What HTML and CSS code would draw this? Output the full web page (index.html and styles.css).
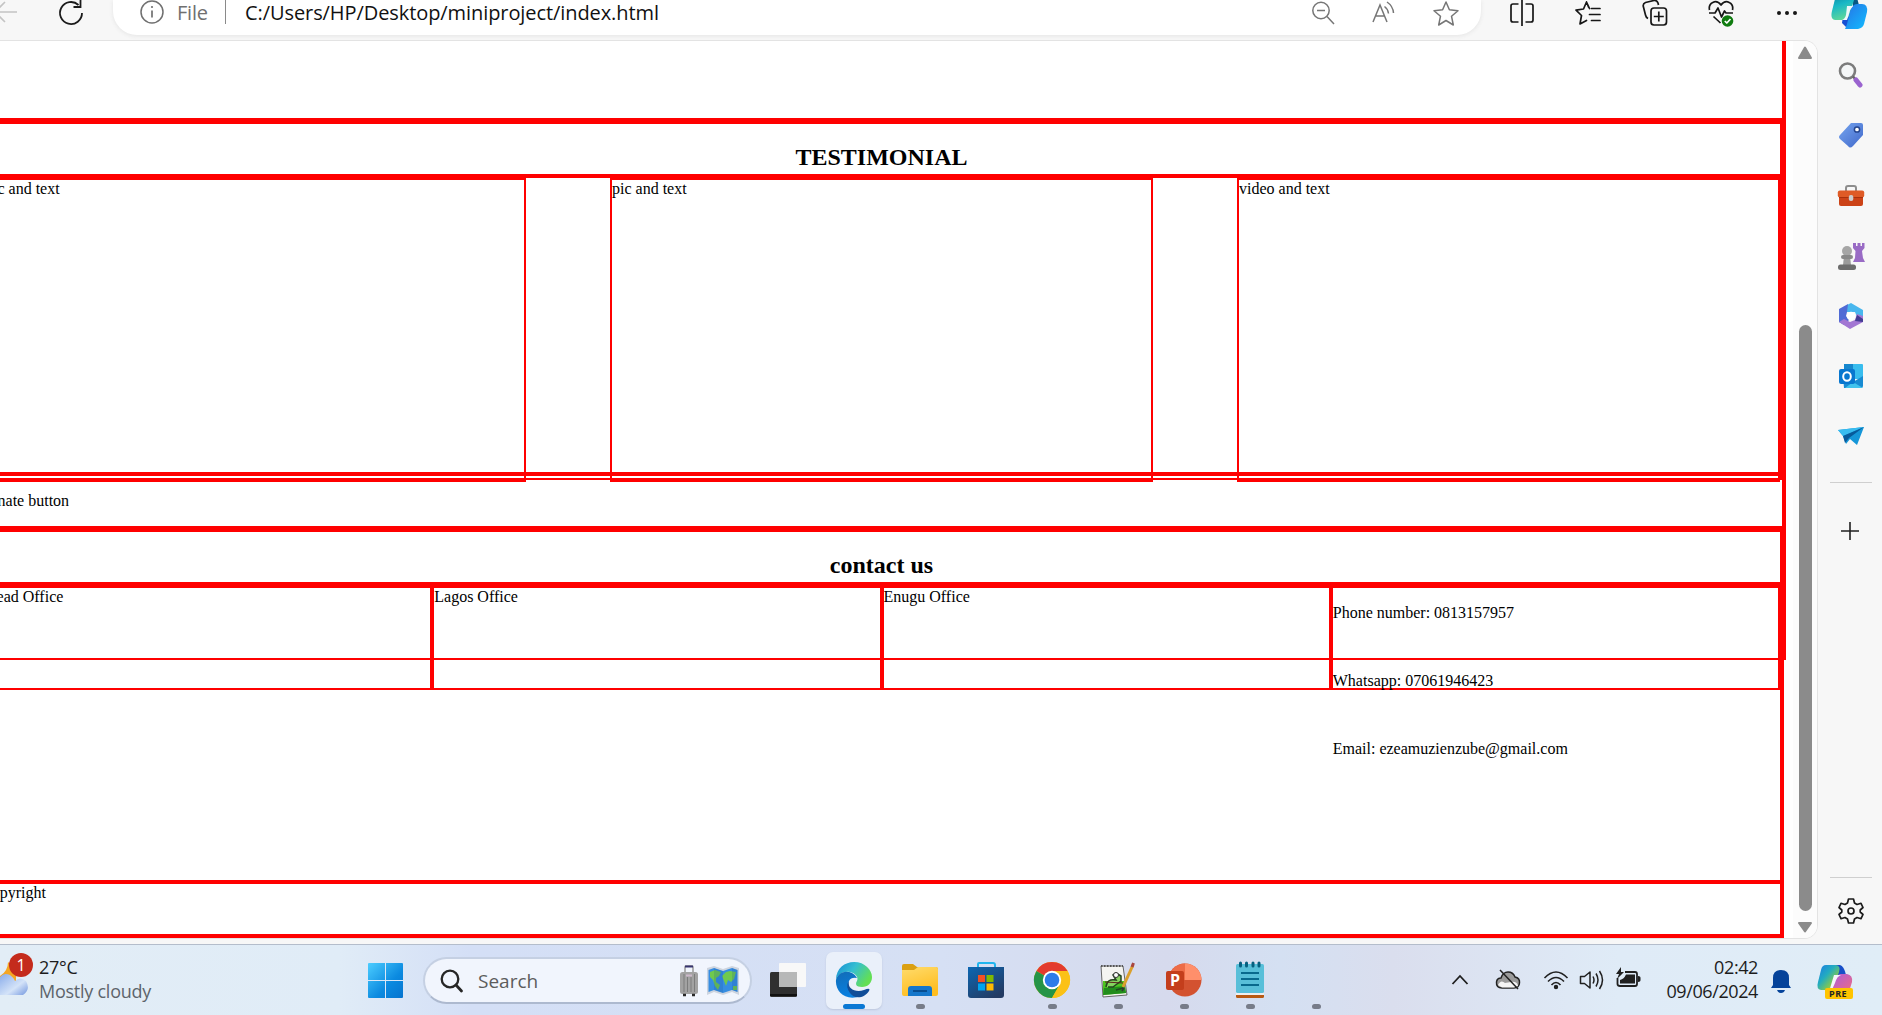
FILE: index.html
```html
<!DOCTYPE html>
<html lang="en">
<head>
<meta charset="utf-8">
<title>miniproject</title>
<link rel="stylesheet" href="styles.css">
</head>
<body>
<div class="screen">
  <header class="toolbar">
    <div class="nav">
      <svg class="back" width="18" height="26" viewBox="0 0 18 26"><path d="M-8 12H17M5 2L-5 12L5 22" fill="none" stroke="#c4c4c4" stroke-width="1.6"/></svg>
      <svg class="reload" width="28" height="28" viewBox="0 0 28 28"><path d="M25 14A11 11 0 1 1 21.500 6M23.500 1V8H16.500" fill="none" stroke="#1b1b1b" stroke-width="1.8"/></svg>
    </div>
    <div class="address">
      <svg class="info" width="26" height="26" viewBox="0 0 26 26"><circle cx="13" cy="13" r="11" fill="none" stroke="#707070" stroke-width="1.5"/><path d="M13 11.500V18.500" stroke="#707070" stroke-width="1.7"/><circle cx="13" cy="8" r="1.100" fill="#707070"/></svg>
      <span class="scheme">File</span><i class="bar"></i>
      <span class="url">C:/Users/HP/Desktop/miniproject/index.html</span>
      <div class="pillicons">
        <svg width="26" height="26" viewBox="0 0 26 26" fill="none" stroke="#767676" stroke-width="1.5"><circle cx="11" cy="10.500" r="8.200"/><path d="M17 16.500L24 24M7 10.500H15"/></svg>
        <svg width="26" height="26" viewBox="0 0 26 26" fill="none" stroke="#767676" stroke-width="1.5"><path d="M2 22L9 5L16 22M4.500 16H13.500M13.500 6.500Q17 9 17.500 13.500M16 2Q22 6 22.500 13"/></svg>
        <svg width="28" height="28" viewBox="0 0 28 28" fill="none" stroke="#767676" stroke-width="1.5" stroke-linejoin="round"><path d="M14 2L17.400 9.800L26 10.700L19.500 16.200L21.300 25L14 20.500L6.700 25L8.500 16.200L2 10.700L10.600 9.800Z"/></svg>
      </div>
    </div>
    <div class="actions">
      <svg width="28" height="28" viewBox="0 0 28 28" fill="none" stroke="#171717" stroke-width="1.700"><path d="M14 1V27M10.500 5H5Q3 5 3 7V21Q3 23 5 23H10.500M17.500 5H23Q25 5 25 7V21Q25 23 23 23H17.500"/></svg>
      <svg width="28" height="28" viewBox="0 0 28 28" fill="none" stroke="#171717" stroke-width="1.700" stroke-linejoin="round" stroke-linecap="round"><path d="M14.500 8L12.500 3L9.500 10L2 11.200L7.500 16.500L6 25L12.500 21.500M12.500 3L15.500 9.500M17.500 9.500H26M15.500 15.500H26M17.500 21.500H26"/></svg>
      <svg width="28" height="28" viewBox="0 0 28 28" fill="none" stroke="#171717" stroke-width="1.700" stroke-linejoin="round"><rect x="10" y="9" width="15.500" height="17" rx="3"/><path d="M17.800 12.500V22.500M12.800 17.500H22.800M7 19.500Q5 18.500 4.500 16L2.200 7Q2 4.500 4.500 3.500L13 1.500Q16 1.200 17 4L17.500 6"/></svg>
      <svg width="28" height="28" viewBox="0 0 28 28" fill="none" stroke="#171717" stroke-width="1.700" stroke-linejoin="round"><path d="M2.500 11C1 4 9 -.5 14 6C19 -.5 27 4 25.500 11M2 14H8L11 9L14.500 18L17.500 12L19 14H26M6.500 17.500L13.500 24"/><circle cx="20.500" cy="22" r="5.800" fill="#107c10" stroke="none"/><path d="M17.800 22L19.800 24L23.500 20" stroke="#fff"/></svg>
      <svg width="28" height="28" viewBox="0 0 28 28" fill="#171717"><circle cx="6" cy="14" r="2"/><circle cx="14" cy="14" r="2"/><circle cx="22" cy="14" r="2"/></svg>
    </div>
    <svg class="copilot" width="38" height="38" viewBox="0 0 38 38">
      <defs><linearGradient id="ca" x2=".3" y2="1"><stop stop-color="#087d9b"/><stop offset=".5" stop-color="#18b8c6"/><stop offset="1" stop-color="#5bd69c"/></linearGradient><linearGradient id="cb" y2="1"><stop stop-color="#2673e5"/><stop offset="1" stop-color="#12bcff"/></linearGradient></defs>
      <path d="M12 31L17 36L24 15L14 17Z" fill="#164fd3"/><path d="M22 1Q27 2 29 14H23Z" fill="#075782"/>
      <path d="M9 1H21Q25 2 24 8L19 24Q17 28 12 28H5Q0 27 2 19L5 7Q6 2 9 1Z" fill="url(#ca)"/>
      <path d="M15 37H28Q33 36 34 32L37 20Q38 12 32 12H27Q22 12 20 20L17 32Q16 35 15 37Z" fill="url(#cb)"/>
      <path d="M17 14H23Q20 17 19 22L17 28H12Q15 27 16 23Z" fill="#eef7fb"/>
    </svg>
  </header>

  <div class="middle">
    <main class="viewport">
      <div class="page">
        <section class="testimonial">
          <h2>TESTIMONIAL</h2>
          <div class="cards">
            <article>pic and text</article>
            <article>pic and text</article>
            <article>video and text</article>
          </div>
        </section>
        <p class="donate">Donate button</p>
        <section class="contact">
          <h2>contact us</h2>
          <div class="offices">
            <div>Head Office</div>
            <div>Lagos Office</div>
            <div>Enugu Office</div>
            <div class="details"><p>Phone number: 0813157957</p><p>Whatsapp: 07061946423</p><p>Email: ezeamuzienzube@gmail.com</p></div>
          </div>
          <footer>Copyright</footer>
        </section>
      </div>
      <div class="scroll">
        <svg width="16" height="14" viewBox="0 0 16 14"><path d="M8 1.500L14 12H2Z" fill="#8b8b8b" stroke="#8b8b8b" stroke-width="2" stroke-linejoin="round"/></svg>
        <i class="thumb"></i>
        <svg width="16" height="12" viewBox="0 0 16 12"><path d="M8 10.500L14 2H2Z" fill="#8b8b8b" stroke="#8b8b8b" stroke-width="2" stroke-linejoin="round"/></svg>
      </div>
    </main>
    <aside class="sidebar">
      <svg width="28" height="28" viewBox="0 0 28 28"><circle cx="10.500" cy="11" r="7.500" fill="#f4f6f7" stroke="#7c7c7c" stroke-width="2.600"/><path d="M16 16.500L19 20" stroke="#666" stroke-width="2.500"/><path d="M19 20L23 25" stroke="#9a63cf" stroke-width="5" stroke-linecap="round"/></svg>
      <svg width="28" height="30" viewBox="0 0 28 30"><defs><linearGradient id="tg" y2="1"><stop stop-color="#76a5ef"/><stop offset="1" stop-color="#4068ca"/></linearGradient></defs><path d="M14 3H24Q26 3 26 5V15L16 26Q13 29 11 26L3 19Q1 17 3 15Z" fill="url(#tg)"/><circle cx="20" cy="9.500" r="2.600" fill="#fff" stroke="#24458f" stroke-width="1.500"/></svg>
      <svg width="28" height="28" viewBox="0 0 28 28"><path d="M9 9V6Q9 4 11 4H17Q19 4 19 6V9" fill="none" stroke="#8d8d8d" stroke-width="2"/><rect x="2" y="13" width="24" height="11" rx="2" fill="#cc4317"/><rect x=".8" y="8.500" width="26.400" height="7" rx="2" fill="#df5b26"/><path d="M2 15.500H26" stroke="#a9310c"/><rect x="11.800" y="13" width="4.500" height="6" rx="2" fill="#cdcdcd"/></svg>
      <svg width="28" height="28" viewBox="0 0 28 28"><path d="M16 1H19V4H20.500V1H23.500V4H25V1H27.500V6L25 9L26 16L28 20H16L18 16L18.500 9L16 6Z" fill="#996bc5"/><circle cx="10" cy="9" r="5" fill="#a6a6a6"/><path d="M7 14H13L14 23H6Z" fill="#9a9a9a"/><rect x="4" y="13" width="12" height="4" rx="2" fill="#898989"/><rect x="1" y="22.500" width="18" height="5.500" rx="2.500" fill="#6c6c6c"/></svg>
      <svg width="28" height="28" viewBox="0 0 28 28"><path d="M10 3L14 1L26 8V20L21 17L18 10L10 10Z" fill="#49b7ee"/><path d="M11 2L2 7V20L7 23L12 18L9 14L10 10Z" fill="#506bd5"/><path d="M2 20L13 27L26 20V14L20 12L18 18L13 20L7 17Z" fill="#a276d3"/><path d="M20 13L26 17V20L18 19Z" fill="#453c94"/><circle cx="14" cy="14" r="4.300" fill="#fff"/></svg>
      <svg width="28" height="28" viewBox="0 0 28 28"><rect x="7" y="2" width="19" height="15" rx="1" fill="#39bdee"/><path d="M7 2H16V10H7Z" fill="#1687cd"/><path d="M6 14L16 20L26 14V24Q26 26 24 26H7Z" fill="#188bd2"/><path d="M16 20L26 26H8Z" fill="#41c3ed"/><rect x="2" y="7" width="16" height="15" rx="2" fill="#0877cf"/><ellipse cx="10" cy="14.500" rx="3.800" ry="4.200" fill="none" stroke="#fff" stroke-width="2"/></svg>
      <svg width="28" height="28" viewBox="0 0 28 28"><path d="M1 8L27 5L20 23L13 17L9 22L6 14Z" fill="#1596d8"/><path d="M1 8L27 5L6 14Z" fill="#38bcf0"/><path d="M6 14L27 5L12 16L8 21Z" fill="#075a9b"/></svg>
      <i class="rule"></i>
      <svg class="plus" width="20" height="20" viewBox="0 0 20 20"><path d="M10 1V19M1 10H19" stroke="#202020" stroke-width="1.600"/></svg>
      <i class="rule lower"></i>
      <svg class="gear" width="28" height="28" viewBox="0 0 28 28" fill="none" stroke="#1b1b1b" stroke-width="1.700" stroke-linejoin="round"><path d="M11.500 2H16.500L17.500 6L20 7.500L24 6.300L26 10.500L23.200 13V15L26 17.500L24 21.700L20 20.500L17.500 22L16.500 26H11.500L10.500 22L8 20.500L4 21.700L2 17.500L4.800 15V13L2 10.500L4 6.300L8 7.500L10.500 6Z"/><circle cx="14" cy="14" r="3"/></svg>
    </aside>
  </div>

  <div class="taskbar">
    <div class="weather">
      <div class="sky">
        <svg width="30" height="40" viewBox="0 0 30 40"><defs><linearGradient id="cl" y2="1"><stop stop-color="#89acea"/><stop offset=".6" stop-color="#d4e3f8"/><stop offset="1" stop-color="#7397df"/></linearGradient></defs><path d="M8 5Q8 14 0 19V24H16V12Z" fill="#f5a623"/><path d="M0 20Q4 15 10 18Q13 20 15 24Q20 19 26 24Q31 33 23 38H0Z" fill="url(#cl)"/></svg>
        <b class="count">1</b>
      </div>
      <div class="temp"><span>27°C</span><span class="dim">Mostly cloudy</span></div>
    </div>
    <svg class="start" width="36" height="36" viewBox="0 0 36 36"><defs><linearGradient id="wn" x2="1" y2="1"><stop stop-color="#4ccdff"/><stop offset=".6" stop-color="#0b8ae0"/><stop offset="1" stop-color="#0674cf"/></linearGradient></defs><path d="M0 1Q0 0 1 0H17V17H0ZM18 0H34Q35 0 35 1V17H18ZM0 18H17V35H1Q0 35 0 34ZM18 18H35V34Q35 35 34 35H18Z" fill="url(#wn)"/></svg>
    <div class="search">
      <svg width="24" height="24" viewBox="0 0 24 24"><circle cx="10" cy="10" r="8.300" fill="none" stroke="#262626" stroke-width="2.300"/><path d="M16 16L21.500 22" stroke="#262626" stroke-width="2.800" stroke-linecap="round"/></svg>
      <span>Search</span>
      <svg class="bag" width="20" height="32" viewBox="0 0 20 32"><path d="M6 8V2Q6 1 7 1H13Q14 1 14 2V8" fill="none" stroke="#999" stroke-width="1.500"/><path d="M6 1.500H14" stroke="#37356f" stroke-width="2"/><rect x="1" y="7" width="18" height="22" rx="2.500" fill="#a2a2a2"/><path d="M5 9V27M8.500 12V27M12 12V27M15.500 9V27" stroke="#7c7c7c"/><path d="M7 10.500H13" stroke="#ccb9cb" stroke-width="2"/><path d="M4 30H7M13 30H16" stroke="#292929" stroke-width="2.500"/></svg>
      <svg width="34" height="30" viewBox="0 0 34 30"><path d="M1 2L8 0L17 3L26 0L33 2V29L26 26L17 29L8 26L1 29Z" fill="#cdd4df"/><path d="M2.500 4L8 2L17 5L26 2L31.500 4V26L26 24L17 27L8 24L2.500 26Z" fill="#368de1"/><path d="M4 6L9 4L15 6L13 10L10 12V16L14 19L12 24L9 20L7 14L4 11ZM16 10L20 6L24 5L30 6L28 13L25 16L22 14L20 20L18 15ZM27 20H31V24H27Z" fill="#6fc94d"/><path d="M8 2V24L17 27V5ZM26 2V24L31.500 26V4Z" fill="#164c98" opacity=".18"/></svg>
    </div>
    <div class="apps">
      <div class="app"><svg width="38" height="38" viewBox="0 0 38 38"><rect x="1" y="11" width="27" height="25" rx="1.500" fill="#2f2f2f"/><path d="M1 34H28" stroke="#111" stroke-width="2"/><rect x="10" y="2" width="27" height="24" rx="1" fill="#f8f8f8"/><rect x="10" y="11" width="18" height="15" fill="#b7b8b8"/></svg></div>
      <div class="app active"><svg width="38" height="38" viewBox="0 0 38 38"><defs><linearGradient id="eg" x2="1" y2=".5"><stop stop-color="#168bd5"/><stop offset=".5" stop-color="#35bfd1"/><stop offset="1" stop-color="#63df54"/></linearGradient><linearGradient id="eb" x2=".3" y2="1"><stop stop-color="#126cb6"/><stop offset="1" stop-color="#087fe0"/></linearGradient></defs><path d="M1 19C1 7 10 1 19 1C30 1 37 9 37 16C37 22 33 26 27 26C21 26 20 23 22 20C24 16 20 12 15 11C8 10 3 13 1 19Z" fill="url(#eg)"/><path d="M1 19C3 11 11 9 17 12Q21 14 22 17Q16 16 14 20C10 29 20 37 26 35C10 41 0 30 1 19Z" fill="url(#eb)"/><path d="M14 20C12 28 21 32 29 29Q36 26 34 30C29 38 19 38 15 32Q10 25 14 20Z" fill="#104d98"/></svg></div>
      <div class="app run"><svg width="38" height="38" viewBox="0 0 38 38"><defs><linearGradient id="fg" x2=".4" y2="1"><stop stop-color="#ffdc6d"/><stop offset="1" stop-color="#ffbd20"/></linearGradient></defs><path d="M1 5Q1 3 3 3H12L16 6H34Q37 6 37 8V15H1Z" fill="#dba012"/><path d="M1 9H13L17 6H35Q37 6 37 8V33Q37 35 35 35H3Q1 35 1 33Z" fill="url(#fg)"/><path d="M7 35V28Q7 25 10 25H28Q31 25 31 28V35Z" fill="#1476cb"/><path d="M12 30H26" stroke="#064d91" stroke-width="2"/></svg></div>
      <div class="app"><svg width="38" height="38" viewBox="0 0 38 38"><defs><linearGradient id="sg" x2=".7" y2="1"><stop stop-color="#0c67b3"/><stop offset="1" stop-color="#243b63"/></linearGradient></defs><path d="M11 8V3Q11 2 12 2H26Q28 2 28 4V8" fill="none" stroke="#20b5ee" stroke-width="2"/><path d="M1 6H37V34Q37 37 34 37H4Q1 37 1 34Z" fill="url(#sg)"/><path d="M11 14H18V21H11Z" fill="#f25022"/><path d="M19.500 14H26.500V21H19.500Z" fill="#7fba00"/><path d="M11 22.500H18V29.500H11Z" fill="#00a4ef"/><path d="M19.500 22.500H26.500V29.500H19.500Z" fill="#ffb900"/></svg></div>
      <div class="app run"><svg width="38" height="38" viewBox="0 0 38 38"><circle cx="19" cy="19" r="18" fill="#fbc116"/><path d="M19 19L3.400 10A18 18 0 0 1 34.600 10Z" fill="#e33b2e"/><path d="M3.400 10A18 18 0 0 0 19 37L26.800 23.500L19 19Z" fill="#259447"/><path d="M19 10H34.600A18 18 0 0 1 19 37L27 23Z" fill="#fbc116"/><circle cx="19" cy="19" r="9.200" fill="#fff"/><circle cx="19" cy="19" r="7.300" fill="#2c7ce9"/></svg></div>
      <div class="app run"><svg width="38" height="38" viewBox="0 0 38 38"><path d="M2 5L24 5L28 34L4 36Z" fill="#f4f4f1" stroke="#666"/><path d="M2 5H24" stroke="#555" stroke-width="2" stroke-dasharray="1.500 1.500"/><path d="M4 20H25L27 32L4 34Z" fill="#4dc520"/><path d="M5 27L26 25L27 32L4 34Z" fill="#218c1c"/><path d="M7 26Q8 17 17 19L14 14L17 12L22 15V20L18 23L14 26H9M17 29L24 27" fill="#85d35e" stroke="#24441f" stroke-width="1.500"/><circle cx="17" cy="14" r="2.500" fill="#fff" stroke="#333"/><path d="M6 21L24 22" stroke="#5d241f"/><path d="M24 26L34 4" stroke="#dba02c" stroke-width="3"/><path d="M33 6L34.500 2" stroke="#a8453f" stroke-width="3"/><path d="M23 30L25 27" stroke="#333" stroke-width="1.500"/></svg></div>
      <div class="app run"><svg width="38" height="38" viewBox="0 0 38 38"><circle cx="20" cy="19" r="16.500" fill="#d35230"/><path d="M20 2.500A16.500 16.500 0 0 1 36.500 19H20Z" fill="#ff8f6b"/><path d="M20 2.500A16.500 16.500 0 0 0 3.500 19H20Z" fill="#ed6c47"/><rect x="1" y="10" width="18" height="19" rx="2" fill="#c43e1c"/><text class="ppt" x="5" y="25">P</text></svg></div>
      <div class="app run"><svg width="38" height="38" viewBox="0 0 38 38"><rect x="5" y="31" width="28" height="6" rx="1.500" fill="#b85a13"/><path d="M5 31H33V34H5Z" fill="#efefef"/><rect x="5" y="3" width="28" height="29" rx="1.500" fill="#58bfd9"/><path d="M9.500 2V5M15.500 2V5M22 2V5M28 2V5" stroke="#066080" stroke-width="3" stroke-linecap="round"/><path d="M10 12H28M10 18H28M10 24H28" stroke="#08698d" stroke-width="2"/></svg></div>
      <div class="app run"></div>
    </div>
    <div class="tray">
      <svg width="18" height="12" viewBox="0 0 18 12"><path d="M1.500 10L9 2L16.500 10" fill="none" stroke="#1e1e1e" stroke-width="1.800"/></svg>
      <svg class="cloud" width="26" height="22" viewBox="0 0 26 22"><path d="M7 19Q1 19 1.500 13Q2 9 6 9Q8 3 13 3Q18 3 20 8Q25 9 24.500 14Q24 19 19 19Z" fill="#9b9b9b" stroke="#222" stroke-width="1.500"/><path d="M3 16Q6 10 10 14L16 13Q22 12 23 17L19 18.500H7Z" fill="#f5f5f5"/><path d="M5 1L23 20" stroke="#222" stroke-width="1.500"/></svg>
      <svg class="wifi" width="26" height="20" viewBox="0 0 26 20" fill="none" stroke="#202020" stroke-width="1.600"><path d="M1.500 8Q13 -4 24.500 8M5 11.500Q13 3.500 21 11.500M8.500 15Q13 10 17.500 15"/><circle cx="13" cy="17" r="1.400" fill="#202020"/></svg>
      <svg class="sound" width="26" height="22" viewBox="0 0 26 22" fill="none" stroke="#202020" stroke-width="1.500" stroke-linejoin="round"><path d="M1.500 7.500H5.500L11 3V19L5.500 14.500H1.500ZM14 7.500Q16 11 14 14.500M17 4.500Q21 11 17 17.500M20.500 2Q26.500 11 20.500 20"/></svg>
      <svg class="battery" width="26" height="22" viewBox="0 0 26 22"><path d="M10 5H20Q22 5 22 7V17Q22 19 20 19H5Q2.500 19 2.500 17V11" fill="none" stroke="#202020" stroke-width="1.800"/><path d="M11 7.500H20V16.500H5V13Q9 12 11 7.500Z" fill="#202020"/><path d="M23 9Q26 9 25.500 12Q26 15 23 15Z" fill="#202020"/><path d="M6 0L1 7H4L2 12L9 5H6Z" fill="#202020"/></svg>
      <div class="clock"><span>02:42</span><span>09/06/2024</span></div>
      <svg class="bell" width="22" height="24" viewBox="0 0 22 24"><path d="M3 16V9Q3 1 11 1Q19 1 19 9V16L21 19H1Z" fill="#05439a"/><path d="M7 21H15Q14 24 11 24Q8 24 7 21Z" fill="#05439a"/></svg>
      <svg class="pre" width="38" height="38" viewBox="0 0 38 38"><defs><linearGradient id="pa" y2="1"><stop stop-color="#1a79e7"/><stop offset=".4" stop-color="#22acc0"/><stop offset=".7" stop-color="#83c84f"/><stop offset="1" stop-color="#f7b719"/></linearGradient><linearGradient id="pb" y2="1"><stop stop-color="#a45ae5"/><stop offset="1" stop-color="#f66e78"/></linearGradient></defs><path d="M18 2H24Q28 3 30 12H22Z" fill="#174fc8"/><path d="M10 2H20Q25 3 23 9L18 23Q16 27 10 27H5Q0 26 2 19L5 7Q6 2 10 2Z" fill="url(#pa)"/><path d="M24 11H31Q37 12 36 19L32 32H13L18 20Q20 12 24 11Z" fill="url(#pb)"/><path d="M18 12H25Q21 13 19 20L15 29H9Q14 28 15 22Z" fill="#f4f5fb"/><rect x="9" y="25" width="28" height="11" rx="2" fill="#ffc400"/><text class="pretext" x="13" y="34">PRE</text></svg>
    </div>
  </div>
</div>
</body>
</html>
```
FILE: styles.css
```css
* { box-sizing: border-box; }
body { margin: 0; overflow: hidden; font-family: "Liberation Serif", "Times New Roman", serif; font-size: 16px; color: #000; }
svg { display: block; flex: none; }
.screen { width: 1882px; height: 1015px; display: flex; flex-direction: column; overflow: hidden; background: #f7f7f7; }

/* Browser toolbar */
.toolbar { height: 40px; flex: none; display: flex; align-items: flex-start; font-family: "Open Sans", "Noto Sans", sans-serif; }
.nav { width: 113px; flex: none; display: flex; gap: 39px; }
.reload { margin-top: -1px; }
.address { width: 1368px; height: 35px; flex: none; display: flex; align-items: flex-start; background: #fff; border-radius: 0 0 24px 24px; box-shadow: 0 1px 4px #e4e4e4; }
.info { margin: -1px 12px 0 26px; }
.scheme, .url { font-size: 20px; line-height: 26px; white-space: nowrap; }
.scheme { width: 48px; color: #707070; letter-spacing: -0.2px; }
.bar { width: 1px; height: 24px; background: #8a8a8a; margin-right: 19px; }
.url { width: 1065px; letter-spacing: -0.08px; color: #111; }
.pillicons { display: flex; gap: 35px; margin-left: 0; }
.actions { display: flex; gap: 38.3px; margin: -1px 0 0 27px; }
.copilot { margin: -8px 0 0 29px; }

/* Page area */
.middle { height: 904px; flex: none; display: flex; }
.viewport { width: 1818px; height: 899px; flex: none; display: flex; background: #fff; border: solid #e3e3e3; border-width: 1px 1px 1px 0; border-radius: 0 14px 14px 0; }
.page { width: 1786px; height: 619px; flex: none; padding-top: 77px; border: solid red; border-width: 0 4px 2px 0; }
h2 { margin: 0; height: 50px; padding-top: 19px; font-size: 24px; line-height: 28px; text-align: center; margin-left: -17px; }
.testimonial { height: 362px; border: solid red; border-width: 6px 2px 2px 0; }
.cards { height: 302px; border: solid red; border-width: 4px 0; display: grid; grid-template-columns: repeat(3, 543px); gap: 84px; margin-left: -17px; }
.cards article { height: 304px; border: 2px solid red; line-height: 18px; }
.donate { margin: 0 0 0 -22px; height: 46px; padding-top: 12px; line-height: 18px; }
.contact { width: 1784px; height: 412px; border: solid red; border-width: 6px 4px 0 0; }
.offices { height: 298px; display: grid; grid-template-columns: repeat(4, 1fr); align-items: start; margin-left: -17px; border-top: 4px solid red; }
.offices > div { height: 104px; border: 2px solid red; line-height: 18px; }
.details { display: flex; flex-direction: column; gap: 50px; padding-top: 16px; }
.details p { margin: 0; }
footer { height: 58px; border: solid red; border-width: 4px 0; margin-left: -19px; line-height: 18px; }
.scroll { width: 24px; height: 897px; margin-left: 7px; display: flex; flex-direction: column; align-items: center; background: #fcfcfc; border-radius: 0 12px 12px 0; padding: 5px 0 0; }
.thumb { width: 13px; height: 586px; margin: 265px 0 10px; background: #8b8b8b; border-radius: 7px; }

/* Side panel */
.sidebar { width: 64px; display: flex; flex-direction: column; align-items: center; gap: 32px; padding: 20px 0 0 1px; }
.rule { width: 42px; height: 1px; background: #cfcfcf; }
.plus { margin: 6px 2px 0 0; }
.lower { margin-top: 304px; }
.gear { margin-top: -13px; }

/* Taskbar */
.taskbar { height: 71px; flex: none; display: flex; border-top: 1px solid #b4bdcb; font-family: "Open Sans", "Noto Sans", sans-serif; color: #1c1c1c; background: linear-gradient(90deg, #e2edf6 0, #e0ecf7 18%, #d4dff6 25%, #d6e0f4 50%, #d6daed 62%, #d4e0f2 68%, #dadeee 74%, #dfebf7 86%, #e0edf7 100%); }
.weather { width: 368px; flex: none; display: flex; padding-top: 6px; }
.sky { width: 39px; position: relative; padding-top: 6px; }
.count { position: absolute; left: 9px; top: 2px; width: 24px; height: 24px; border-radius: 50%; background: #c42b1c; color: #fff; font-size: 16px; font-weight: 400; line-height: 24px; text-align: center; }
.temp, .clock { display: flex; flex-direction: column; font-size: 18px; line-height: 24px; }
.temp { padding-top: 4px; letter-spacing: -0.25px; }
.dim { color: #5d646b; }
.start { margin-top: 18px; }
.search { width: 329px; height: 47px; margin: 12px 0 0 19px; flex: none; display: flex; align-items: center; padding-left: 15px; border-radius: 24px; background: #f1f5fd; border: 2px solid #c5d0e3; border-bottom-color: #adb9cf; font-size: 19px; color: #5c5c5c; }
.search span { width: 215px; padding-left: 14px; }
.bag { margin-right: 7px; }
.apps { display: flex; margin-left: 3px; }
.app { width: 66px; height: 71px; display: flex; flex-direction: column; align-items: center; padding-top: 16px; position: relative; }
.active { width: 56px; height: 57px; margin: 7px 5px 0; padding-top: 9px; background: #eaf0fa; border-radius: 7px; box-shadow: 0 1px 2px #bdc6dc; }
.active::after, .run::after { content: ""; position: absolute; bottom: 0; width: 22px; height: 5px; border-radius: 3px; background: #0a78d4; }
.run::after { width: 9px; bottom: 7px; background: #777c89; }
.ppt { font: 700 16px "Open Sans", sans-serif; fill: #fff; }
.tray { display: flex; align-items: flex-start; margin-left: 102px; }
.tray svg { margin-top: 29px; }
.tray .cloud { margin: 24px 0 0 26px; }
.tray .wifi { margin: 25px 0 0 22px; }
.tray .sound { margin: 24px 0 0 10px; }
.tray .battery { margin: 22px 0 0 10px; }
.clock { width: 117px; padding-top: 10px; text-align: right; letter-spacing: -0.4px; }
.tray .bell { margin: 24px 0 0 12px; }
.tray .pre { margin: 18px 0 0 24px; }
.pretext { font: 700 9px "Open Sans", sans-serif; letter-spacing: .5px; fill: #222; }
```
